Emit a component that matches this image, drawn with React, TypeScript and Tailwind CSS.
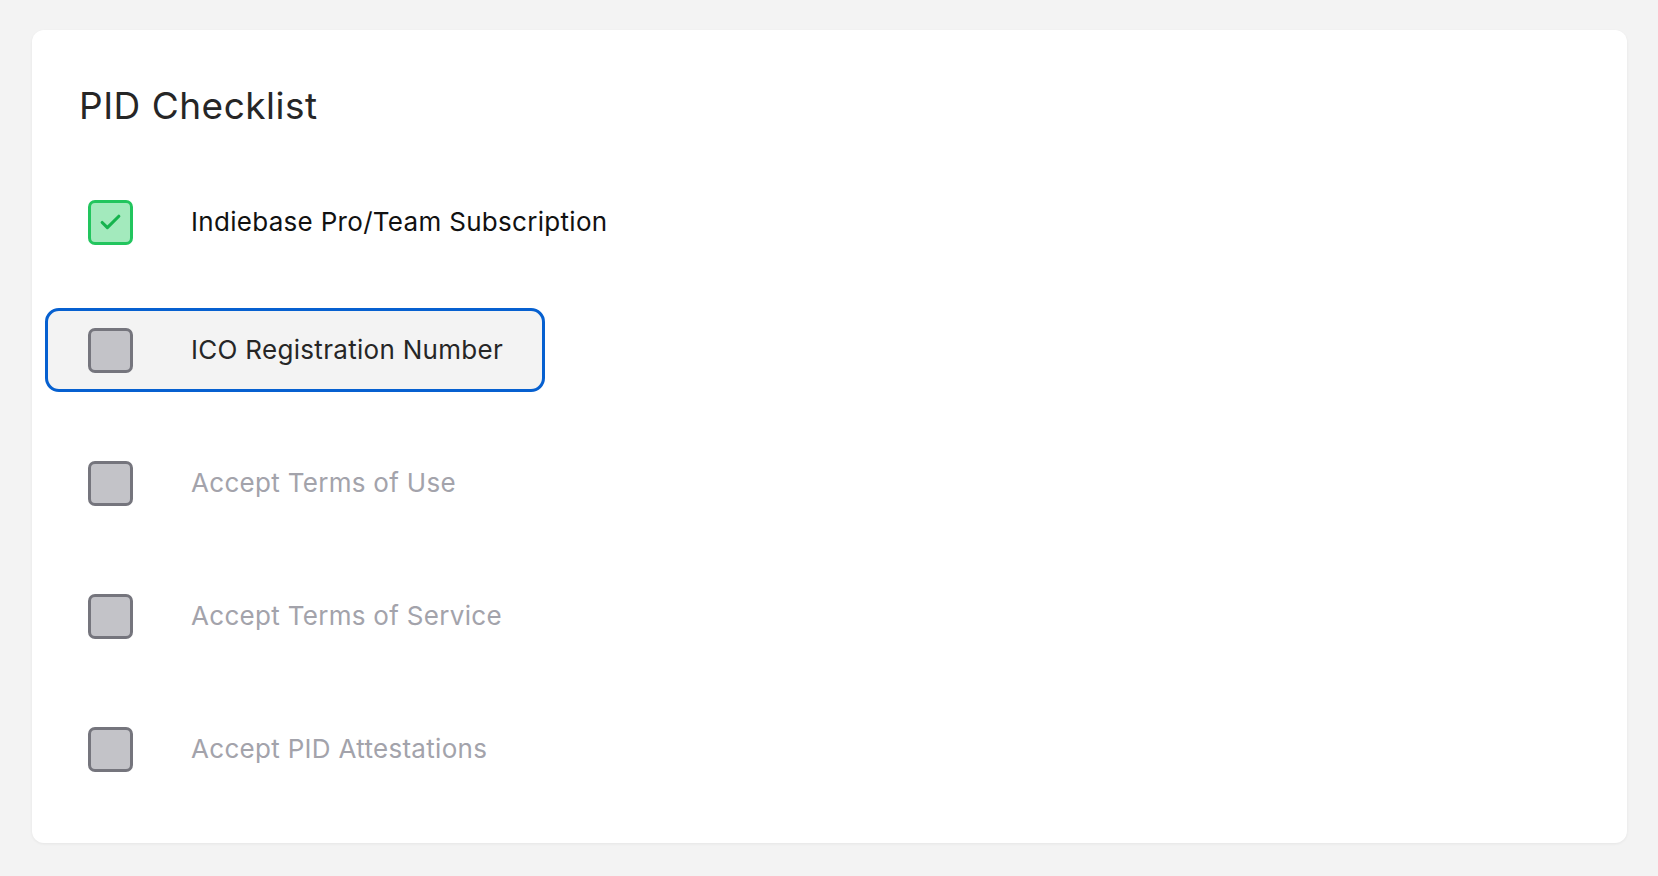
import React from 'react';
import { Check } from 'lucide-react';

type Item = {
  label: string;
  checked?: boolean;
  focused?: boolean;
  disabled?: boolean;
};

const items: Item[] = [
  { label: 'Indiebase Pro/Team Subscription', checked: true },
  { label: 'ICO Registration Number', focused: true },
  { label: 'Accept Terms of Use', disabled: true },
  { label: 'Accept Terms of Service', disabled: true },
  { label: 'Accept PID Attestations', disabled: true },
];

function Checkbox({ checked }: { checked?: boolean }) {
  if (checked) {
    return (
      <span className="w-[45px] h-[45px] shrink-0 rounded-[7px] border-[3px] border-[#22c55e] bg-[#a3eabd] flex items-center justify-center">
        <Check size={25} strokeWidth={3} className="text-[#16b34e]" />
      </span>
    );
  }
  return <span className="w-[45px] h-[45px] shrink-0 rounded-[7px] border-[3px] border-[#75757d] bg-[#c3c3c8]" />;
}

function ChecklistRow({ item }: { item: Item }) {
  const textColor = item.disabled ? 'text-[#a3a3ab]' : item.checked ? 'text-[#111111]' : 'text-[#262626]';
  return (
    <div className="flex">
      <label
        className={`inline-flex items-center h-[84px] pl-[40px] pr-[39px] gap-[58px] rounded-[14px] border-[3px] ${
          item.focused ? 'border-[#0660d0] bg-[#f3f3f3]' : 'border-transparent'
        }`}
      >
        <Checkbox checked={item.checked} />
        <span className={`text-[26px] tracking-[0.3px] leading-none ${textColor}`}>{item.label}</span>
      </label>
    </div>
  );
}

export default function App() {
  return (
    <div className="min-h-screen bg-[#f3f3f3] pt-[30px] pl-[32px] pr-[31px] pb-[34px]" style={{ fontFamily: 'Inter, "Noto Sans", sans-serif' }}>
      <div className="bg-white rounded-[12px] shadow-[0_1px_3px_rgba(0,0,0,0.06)] pt-[57px] pb-[52px] pl-[13px]">
        <h1 className="pl-[34px] text-[37px] tracking-[0.5px] leading-[37px] font-normal text-[#262626]">PID Checklist</h1>
        <div className="mt-[56px] flex flex-col gap-[49px]">
          {items.map((item, i) => (
            <div key={item.label} className={i === 0 ? '-mb-[5px]' : ''}>
              <ChecklistRow item={item} />
            </div>
          ))}
        </div>
      </div>
    </div>
  );
}
